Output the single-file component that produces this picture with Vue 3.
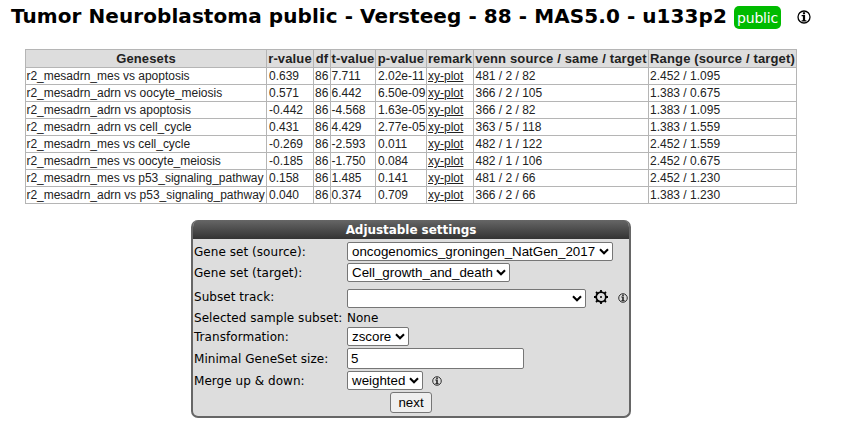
<script setup>
import { h, ref } from 'vue'

const columns = [
  { label: 'Genesets', cls: 'c-name' },
  { label: 'r-value', cls: 'c-r' },
  { label: 'df', cls: 'c-df' },
  { label: 't-value', cls: 'c-t' },
  { label: 'p-value', cls: 'c-p' },
  { label: 'remark', cls: 'c-remark' },
  { label: 'venn source / same / target', cls: 'c-venn' },
  { label: 'Range (source / target)', cls: 'c-range' },
]

const rows = [
  ['r2_mesadrn_mes vs apoptosis', '0.639', '86', '7.711', '2.02e-11', 'xy-plot', '481 / 2 / 82', '2.452 / 1.095'],
  ['r2_mesadrn_adrn vs oocyte_meiosis', '0.571', '86', '6.442', '6.50e-09', 'xy-plot', '366 / 2 / 105', '1.383 / 0.675'],
  ['r2_mesadrn_adrn vs apoptosis', '-0.442', '86', '-4.568', '1.63e-05', 'xy-plot', '366 / 2 / 82', '1.383 / 1.095'],
  ['r2_mesadrn_adrn vs cell_cycle', '0.431', '86', '4.429', '2.77e-05', 'xy-plot', '363 / 5 / 118', '1.383 / 1.559'],
  ['r2_mesadrn_mes vs cell_cycle', '-0.269', '86', '-2.593', '0.011', 'xy-plot', '482 / 1 / 122', '2.452 / 1.559'],
  ['r2_mesadrn_mes vs oocyte_meiosis', '-0.185', '86', '-1.750', '0.084', 'xy-plot', '482 / 1 / 106', '2.452 / 0.675'],
  ['r2_mesadrn_mes vs p53_signaling_pathway', '0.158', '86', '1.485', '0.141', 'xy-plot', '481 / 2 / 66', '2.452 / 1.230'],
  ['r2_mesadrn_adrn vs p53_signaling_pathway', '0.040', '86', '0.374', '0.709', 'xy-plot', '366 / 2 / 66', '1.383 / 1.230'],
]

const minSize = ref('5')

const InfoIcon = () =>
  h('svg', { viewBox: '0 0 14 14' }, [
    h('circle', { cx: 7, cy: 7, r: 6, fill: 'none', stroke: 'currentColor', 'stroke-width': 1.3 }),
    h('path', { d: 'M5.9 2.2h2.2v2H5.9zM4.6 5h3.5v5.2h1.3v1.3H4.6v-1.3h1.3V6.2H4.6z', fill: 'currentColor' }),
  ])

const Chevron = () =>
  h('svg', { viewBox: '0 0 10 7', class: 'chev' }, [
    h('path', { d: 'M1 1.2l4 4 4-4', fill: 'none', stroke: '#000', 'stroke-width': 2.1 }),
  ])
</script>

<template>
  <main class="page">
    <header class="heading">
      <h1>Tumor Neuroblastoma public - Versteeg - 88 - MAS5.0 - u133p2</h1>
      <span class="tag">public</span>
      <InfoIcon class="info-lg" />
    </header>

    <table class="results">
      <thead>
        <tr>
          <th v-for="c in columns" :key="c.label" :class="c.cls">{{ c.label }}</th>
        </tr>
      </thead>
      <tbody>
        <tr v-for="r in rows" :key="r[0]">
          <td v-for="(v, i) in r" :key="i" :class="columns[i].cls">
            <a v-if="i === 5">{{ v }}</a>
            <template v-else>{{ v }}</template>
          </td>
        </tr>
      </tbody>
    </table>

    <section class="panel">
      <h2>Adjustable settings</h2>
      <div class="row">
        <label>Gene set (source):</label>
        <div class="select w-source"><span>oncogenomics_groningen_NatGen_2017</span><Chevron /></div>
      </div>
      <div class="row">
        <label>Gene set (target):</label>
        <div class="select w-target"><span>Cell_growth_and_death</span><Chevron /></div>
      </div>
      <div class="row r-track">
        <label>Subset track:</label>
        <div class="select w-track"><span></span><Chevron /></div>
        <svg class="gear" viewBox="0 0 14 14">
          <path d="M7 0v3M7 11v3M0 7h3M11 7h3M2 2l2 2M10 10l2 2M2 12l2-2M10 4l2-2" stroke="#000" stroke-width="1.8" />
          <circle cx="7" cy="7" r="4.8" fill="#ddd" stroke="#000" stroke-width="1.7" />
          <circle cx="7" cy="7" r="1" fill="#000" />
        </svg>
        <InfoIcon class="info-sm track-info" />
      </div>
      <div class="row r-sample">
        <label>Selected sample subset:</label>
        <span class="none">None</span>
      </div>
      <div class="row">
        <label>Transformation:</label>
        <div class="select w-zscore"><span>zscore</span><Chevron /></div>
      </div>
      <div class="row r-size">
        <label>Minimal GeneSet size:</label>
        <input v-model="minSize" type="text" />
      </div>
      <div class="row">
        <label>Merge up &amp; down:</label>
        <div class="select w-merge"><span>weighted</span><Chevron /></div>
        <InfoIcon class="info-sm merge-info" />
      </div>
      <button type="button">next</button>
    </section>
  </main>
</template>

<style>
body {
  background: #fff;
}
</style>

<style scoped>
.page {
  box-sizing: border-box;
  width: 849px;
  height: 433px;
  overflow: hidden;
  font-family: "DejaVu Sans", Verdana, sans-serif;
  color: #000;
}
.heading {
  display: flex;
  align-items: flex-start;
  height: 49px;
  padding-left: 11px;
  box-sizing: border-box;
}
h1 {
  width: 723px;
  margin: 4px 0 0;
  font-size: 20px;
  line-height: 24px;
  font-weight: bold;
  letter-spacing: 0.07px;
  white-space: nowrap;
}
.tag {
  width: 47px;
  height: 23px;
  margin-top: 6px;
  border-radius: 5px;
  background: #00bb00;
  color: #fff;
  font-size: 14px;
  line-height: 24px;
  text-align: center;
  letter-spacing: -0.2px;
}
.info-lg {
  width: 14px;
  height: 14px;
  margin: 10px 0 0 16px;
}
.results {
  table-layout: fixed;
  width: 772px;
  margin-left: 25px;
  border-collapse: separate;
  border-spacing: 0;
  border: solid #b5b5b5;
  border-width: 1px 0 0 1px;
  font-family: "Liberation Sans", Arial, sans-serif;
  font-size: 12px;
  color: #222;
}
.results th,
.results td {
  box-sizing: border-box;
  height: 17px;
  padding: 0 0 0 1px;
  border: solid #b5b5b5;
  border-width: 0 1px 1px 0;
  line-height: 16px;
  text-align: left;
  white-space: nowrap;
}
.results th {
  height: 18px;
  padding: 0;
  background: #ddd;
  font-size: 13px;
  line-height: 17px;
  letter-spacing: 0.14px;
  text-align: center;
}
.results td.c-name {
  padding-left: 0.4px;
  letter-spacing: -0.01px;
}
.results td.c-r,
.results td.c-p { padding-left: 2px; }
.results td.c-venn { padding-left: 1.5px; }
.results td.c-t { padding-left: 0.5px; }
.c-name { width: 241px; }
.c-r { width: 47px; }
.c-df { width: 17px; }
.c-t { width: 45px; }
.c-p { width: 51px; }
.c-remark { width: 47px; }
.c-venn { width: 175px; }
.c-range { width: 148px; }
.results a {
  text-decoration: underline;
}
.panel {
  box-sizing: border-box;
  width: 440px;
  height: 198px;
  margin: 16px 0 0 191px;
  border: 2px solid #666;
  border-top: 0;
  border-radius: 7px;
  background: #ddd;
  overflow: hidden;
  font-size: 12px;
}
h2 {
  height: 19px;
  margin: 0 0 2px;
  background: linear-gradient(#666, #333);
  color: #fff;
  font-size: 12px;
  line-height: 21px;
  letter-spacing: -0.05px;
  text-align: center;
}
.row {
  display: flex;
  align-items: center;
  height: 21px;
  padding-left: 1px;
}
label {
  width: 153px;
  letter-spacing: 0.05px;
  white-space: nowrap;
}
.r-track {
  height: 27px;
  align-items: flex-start;
}
.r-track label {
  margin-top: 7px;
}
.r-track .select {
  margin-top: 6px;
}
.r-sample { height: 16px; }
.r-size { height: 23px; }
.select {
  display: flex;
  align-items: center;
  justify-content: space-between;
  box-sizing: border-box;
  height: 19px;
  padding: 0 3px 0 4px;
  border: 1px solid #767676;
  border-radius: 2px;
  background: #fff;
  font-family: "Liberation Sans", Arial, sans-serif;
  font-size: 13.33px;
  white-space: nowrap;
}
.chev {
  flex: none;
  width: 10px;
  height: 7px;
}
.w-source { width: 266px; }
.w-target { width: 163px; }
.w-track { width: 239px; }
.w-zscore { width: 62px; }
.w-merge { width: 76px; }
.gear {
  width: 14px;
  height: 14px;
  margin: 7px 0 0 8px;
}
.info-sm {
  width: 10px;
  height: 10px;
  color: #222;
}
.track-info { margin: 10px 0 0 10px; }
.merge-info { margin-left: 9px; }
input {
  box-sizing: border-box;
  width: 177px;
  height: 21px;
  margin: 0;
  padding: 0 3px;
  border: 1px solid #767676;
  border-radius: 2px;
  background: #fff;
  font-family: "Liberation Sans", Arial, sans-serif;
  font-size: 13.33px;
}
button {
  display: block;
  box-sizing: border-box;
  width: 42px;
  height: 21px;
  margin: 1px 0 0 197px;
  padding: 0;
  border: 1px solid #767676;
  border-radius: 3px;
  background: #efefef;
  color: #000;
  font-family: "Liberation Sans", Arial, sans-serif;
  font-size: 13.33px;
}
</style>
